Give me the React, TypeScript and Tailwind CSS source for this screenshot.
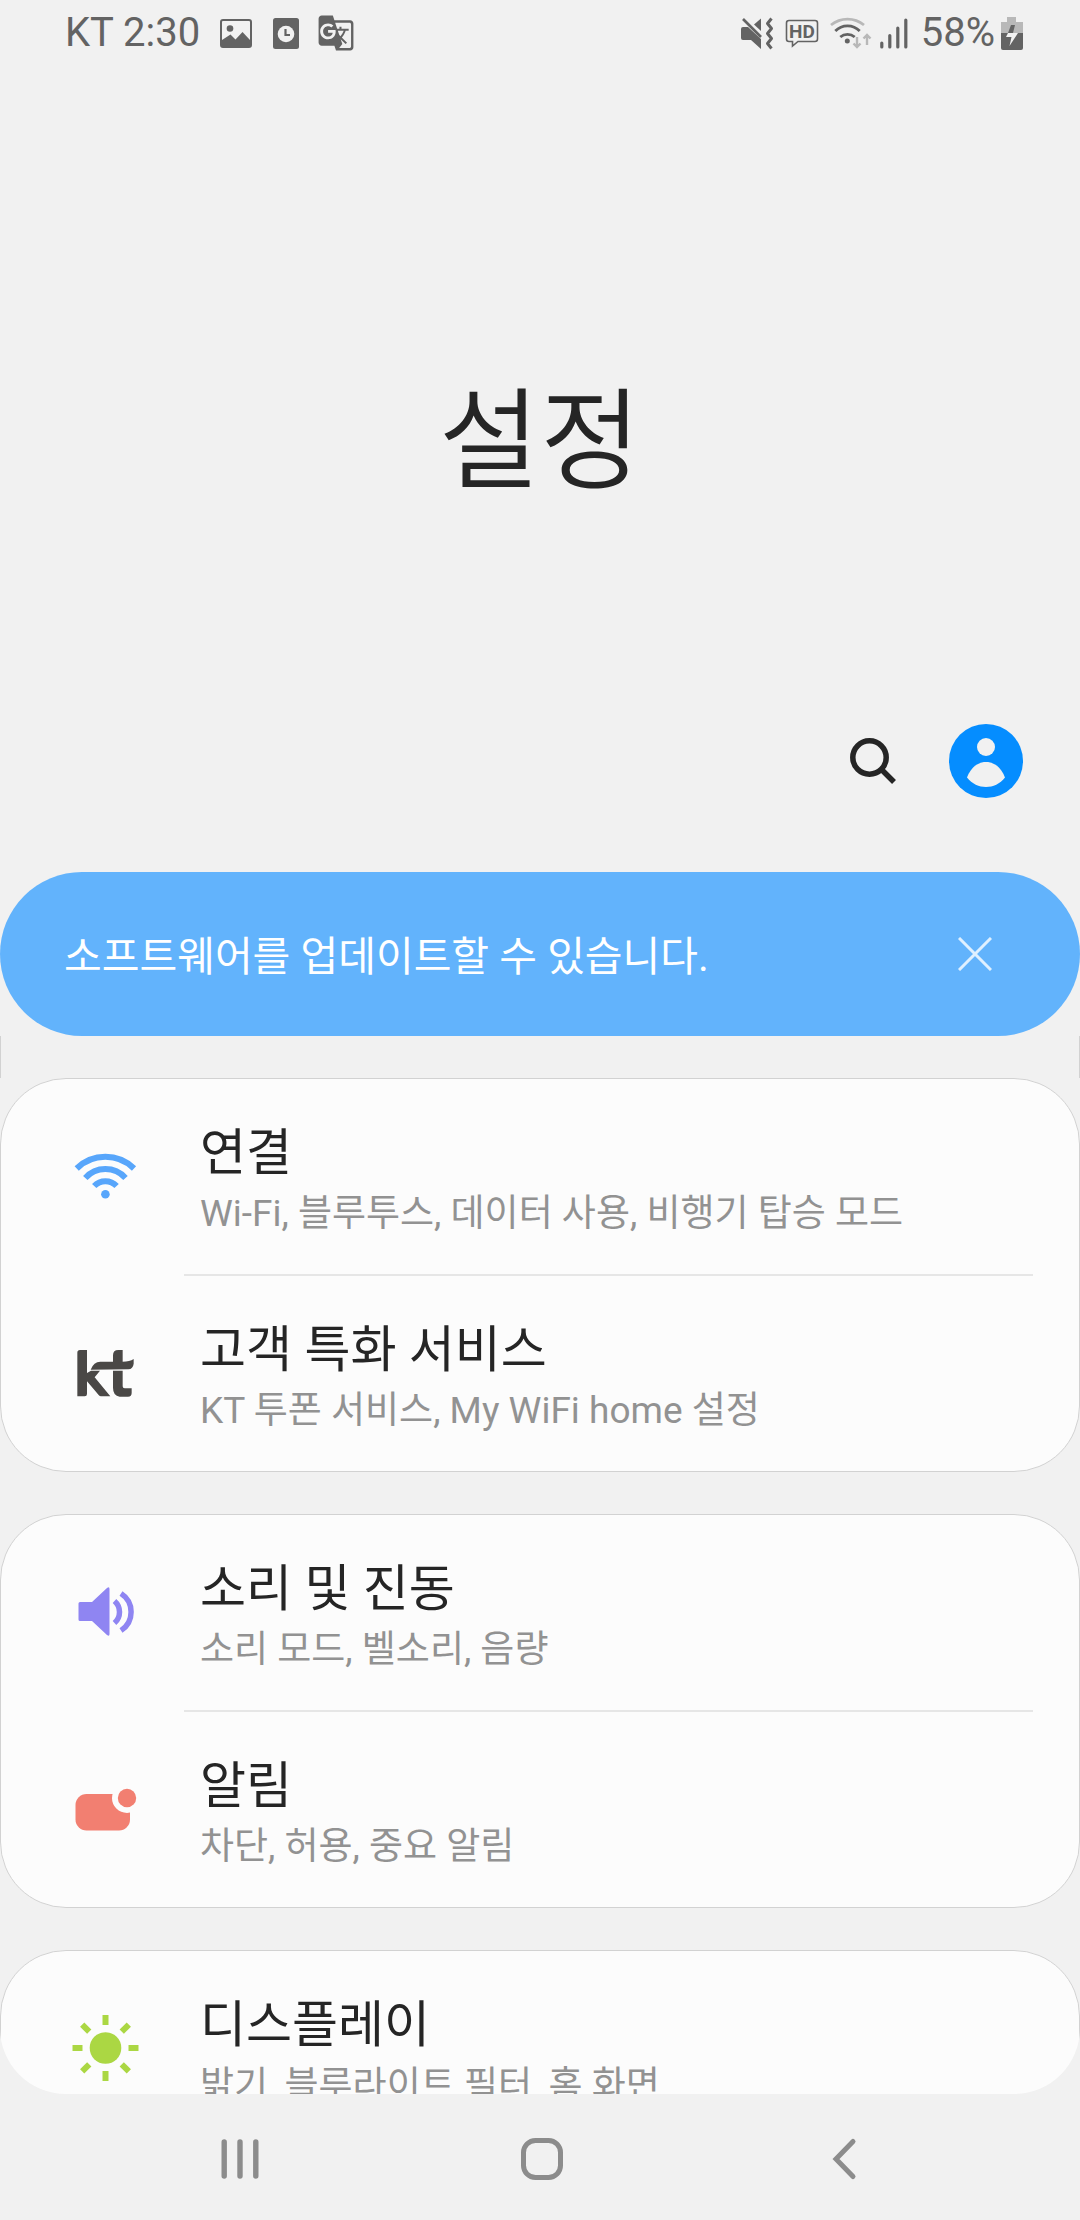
import React from 'react';
import { MdGTranslate } from 'react-icons/md';

interface SettingItem {
  title: string;
  summary: string;
  icon: React.JSX.Element;
}

function WifiIcon(): React.JSX.Element {
  return (
    <svg viewBox="0 0 72 72" className="size-[72px]" fill="none" stroke="#58a6fb" strokeWidth="6">
      <path d="M7.7 27.5A41 41 0 0 1 65 27.5" />
      <path d="M16.3 37A27 27 0 0 1 56.5 37" />
      <path d="M25.2 45A15.4 15.4 0 0 1 47.6 45" />
      <circle cx="36.4" cy="53.2" r="4.3" fill="#58a6fb" stroke="none" />
    </svg>
  );
}

function KtLogo(): React.JSX.Element {
  return (
    <svg viewBox="0 0 216 216" className="size-[72px]" fill="#4a4846">
      <path d="M33 39H54V108L66 101H93L77 121L124 178H96Q92 178 89 174L54 133V171Q54 178 47 178H25V47Q25 39 33 39Z" />
      <path d="M132 74V55Q132 39 148 39H161V74Q182 74 194 66V80Q192 96 178 97L65 98Q74 74 94 74Z" />
      <path d="M132 101H161V148Q161 154 167 154H188V168Q188 179 177 179H152Q132 176 132 152Z" />
    </svg>
  );
}

function SoundIcon(): React.JSX.Element {
  return (
    <svg viewBox="0 0 72 72" className="size-[72px]" fill="none" stroke="#8f85f2" strokeWidth="5.5">
      <path
        d="M11 25H23L38 11Q40.5 9 40.5 12V57Q40.5 60 38 58L23 44H11Q9.5 44 9.5 42.5V26.5Q9.5 25 11 25Z"
        fill="#8f85f2"
        stroke="none"
      />
      <path d="M45.5 24A14.6 14.6 0 0 1 45.5 46" />
      <path d="M52 16.5A22 22 0 0 1 52 53.5" />
    </svg>
  );
}

function NotificationIcon(): React.JSX.Element {
  return (
    <svg viewBox="0 0 72 72" className="size-[72px]" fill="#f27f71">
      <rect x="6.5" y="21" width="54.5" height="36.5" rx="11" />
      <circle cx="58" cy="25" r="15" fill="#fcfcfc" />
      <circle cx="58" cy="25" r="9.2" />
    </svg>
  );
}

function SunIcon(): React.JSX.Element {
  const angles = [0, 45, 90, 135, 180, 225, 270, 315];

  return (
    <svg viewBox="0 0 72 72" className="size-[72px]" fill="#abd743">
      <circle cx="36.5" cy="35" r="15.8" />
      {angles.map((angle) => (
        <rect key={angle} x="33.5" y="2" width="6" height="10" transform={`rotate(${angle} 36.5 35)`} />
      ))}
    </svg>
  );
}

const groups: SettingItem[][] = [
  [
    {
      title: '연결',
      summary: 'Wi-Fi, 블루투스, 데이터 사용, 비행기 탑승 모드',
      icon: <WifiIcon />,
    },
    {
      title: '고객 특화 서비스',
      summary: 'KT 투폰 서비스, My WiFi home 설정',
      icon: <KtLogo />,
    },
  ],
  [
    { title: '소리 및 진동', summary: '소리 모드, 벨소리, 음량', icon: <SoundIcon /> },
    { title: '알림', summary: '차단, 허용, 중요 알림', icon: <NotificationIcon /> },
  ],
  [{ title: '디스플레이', summary: '밝기, 블루라이트 필터, 홈 화면', icon: <SunIcon /> }],
];

function StatusBar(): React.JSX.Element {
  return (
    <div className="flex h-[66px] shrink-0 items-center justify-between pr-[57px] pl-[65px] text-[40px] leading-[66px] text-[#636363]">
      <div className="flex items-center">
        <span>KT 2:30</span>
        <svg viewBox="0 0 32 29" className="ml-5 h-[29px] w-8" fill="#636363">
          <rect x="1" y="1" width="30" height="27" rx="2" fill="none" stroke="#636363" strokeWidth="2" />
          <circle cx="10" cy="9.5" r="3.3" />
          <path d="M2 21L10.5 15.5L15.5 20.5L22.5 13L30 21V28H2Z" />
        </svg>
        <svg viewBox="0 0 26 31" className="ml-[21px] h-[31px] w-[26px]" fill="#636363">
          <rect width="26" height="31" rx="2.5" />
          <circle cx="13" cy="16" r="8.3" fill="#f1f1f1" />
          <path d="M12.5 11V17H17" fill="none" stroke="#636363" strokeWidth="2.2" />
        </svg>
        <MdGTranslate className="ml-[18px] size-[38px]" />
      </div>

      <div className="flex items-center">
        <svg viewBox="0 0 33 33" className="size-[33px]" fill="#636363">
          <path d="M0 12Q0 10 2 10H7L20 22V32L10 23H2Q0 23 0 21Z" />
          <path d="M13 7.5L20 1.5V14Z" />
          <path d="M2 2L20 20" stroke="#636363" strokeWidth="2.6" />
          <path
            d="M30.5 1.5L26.5 6.5L30.5 11.5L26.5 16.5L30.5 21.5L26.5 26.5L30.5 31.5"
            fill="none"
            stroke="#636363"
            strokeWidth="3"
            strokeLinejoin="round"
          />
        </svg>
        <svg viewBox="0 0 34 29" className="ml-[11px] h-[29px] w-[34px]" fill="none">
          <path
            d="M4 1.5H30Q32.5 1.5 32.5 4V20Q32.5 22.5 30 22.5H13L7.5 27V22.5H4Q1.5 22.5 1.5 20V4Q1.5 1.5 4 1.5Z"
            stroke="#636363"
            strokeWidth="1.6"
          />
          <text x="17" y="18.5" textAnchor="middle" fontSize="19" fontWeight="700" fill="#636363">
            HD
          </text>
        </svg>
        <svg viewBox="0 0 42 32" className="ml-[11px] h-8 w-[42px]" fill="none" stroke="#636363" strokeWidth="2.8">
          <path d="M1 8A26 26 0 0 1 34 8" stroke="#b8b8b8" />
          <path d="M5.3 14A17 17 0 0 1 29.7 14" />
          <path d="M10.3 20A11 11 0 0 1 24.7 20" />
          <circle cx="17.3" cy="24" r="2.5" fill="#636363" stroke="none" />
          <path d="M27 20V30M23.5 26.5L27 30L30.5 26.5" stroke="#b8b8b8" strokeWidth="2.4" />
          <path d="M37 28V18M33.5 21.5L37 18L40.5 21.5" stroke="#b8b8b8" strokeWidth="2.4" />
        </svg>
        <svg viewBox="0 0 28 31" className="ml-2 h-[31px] w-7" stroke="#636363" strokeWidth="3.2" strokeLinecap="round">
          <path d="M1.8 25V29M9.8 17.5V29M17.8 10V29M25.8 2V29" />
        </svg>
        <span className="ml-[13px]">58%</span>
        <svg viewBox="0 0 22 33" className="ml-[6px] h-[33px] w-[22px]">
          <path d="M6 0H15V5H22V17H0V5H6Z" fill="#b8b8b8" />
          <path d="M0 16H22V31Q22 33 20 33H2Q0 33 0 31Z" fill="#636363" />
          <path d="M10 8H14L12 16H7Z" fill="#636363" />
          <path d="M7 16H17L8.5 29L10.5 20H5Z" fill="#f1f1f1" />
        </svg>
      </div>
    </div>
  );
}

function Header(): React.JSX.Element {
  return (
    <header className="shrink-0 pt-[296px] pb-[74px]">
      <h1 className="text-center font-['Noto_Sans_CJK_KR_DemiLight','Noto_Sans_CJK_KR',sans-serif] text-[110px] leading-[140px] font-[350] text-[#252525]">
        설정
      </h1>
      <div className="mt-[222px] flex h-[74px] items-center justify-end gap-[52px] pr-[57px]">
        <button type="button" aria-label="검색">
          <svg viewBox="0 0 48 48" className="size-12" fill="none" stroke="#252525" strokeWidth="5.5">
            <circle cx="20.5" cy="20.5" r="16.7" />
            <path d="M32 32L45 45" />
          </svg>
        </button>
        <button type="button" aria-label="프로필">
          <svg viewBox="0 0 74 74" className="size-[74px]" fill="#f1f1f1">
            <circle cx="37" cy="37" r="37" fill="#058dff" />
            <circle cx="37" cy="23" r="9" />
            <path d="M18 53.5C22 43 29 38 37 38S52 43 56 53.5C51 60 44 63 37 63S23 60 18 53.5Z" />
          </svg>
        </button>
      </div>
    </header>
  );
}

function UpdateBanner(): React.JSX.Element {
  return (
    <div className="flex items-center justify-between rounded-full bg-[#62b3fc] py-[49px] pr-[88px] pl-16">
      <p className="pt-[6px] text-[41px] leading-[60px] text-white">소프트웨어를 업데이트할 수 있습니다.</p>
      <button type="button" aria-label="닫기">
        <svg viewBox="0 0 34 34" className="size-[34px]" stroke="#dff0ff" strokeWidth="3">
          <path d="M1 1L33 33M33 1L1 33" />
        </svg>
      </button>
    </div>
  );
}

function SettingRow({ item, divided }: { item: SettingItem; divided: boolean }): React.JSX.Element {
  return (
    <button type="button" className="flex w-full items-stretch text-left">
      <span className="flex w-[183px] shrink-0 items-center pl-[68px]">{item.icon}</span>
      <span
        className={`mr-[46px] flex flex-1 flex-col pt-10 pb-[33px] pl-4 ${divided ? 'border-t-2 border-[#e6e6e6]' : ''}`}
      >
        <span className="text-[50px] leading-[68px] text-[#252525]">{item.title}</span>
        <span className="text-[37px] leading-[54px] text-[#929292]">{item.summary}</span>
      </span>
    </button>
  );
}

function NavigationBar(): React.JSX.Element {
  return (
    <nav className="grid h-[126px] shrink-0 grid-cols-3 items-center pt-1 pr-[85px] pl-[89px]">
      <button type="button" aria-label="최근 앱" className="flex justify-center">
        <svg viewBox="0 0 44 44" className="size-11" stroke="#8c8c8c" strokeWidth="5.4" strokeLinecap="round">
          <path d="M6.2 5V39M22 5V39M37.8 5V39" />
        </svg>
      </button>
      <button type="button" aria-label="홈" className="flex justify-center">
        <svg viewBox="0 0 44 44" className="size-11" fill="none" stroke="#8c8c8c" strokeWidth="5">
          <rect x="3.5" y="3.5" width="37" height="37" rx="12" />
        </svg>
      </button>
      <button type="button" aria-label="뒤로" className="flex justify-center">
        <svg viewBox="0 0 44 44" className="size-11" fill="none" stroke="#8c8c8c" strokeWidth="5" strokeLinecap="round">
          <path d="M31 4.5L14 22L31 39.5" />
        </svg>
      </button>
    </nav>
  );
}

export default function App(): React.JSX.Element {
  return (
    <div className="flex h-screen flex-col bg-[#f1f1f1] font-[Roboto,'Noto_Sans_CJK_KR',sans-serif]">
      <StatusBar />
      <Header />
      <main className="min-h-0 flex-1 overflow-hidden rounded-b-[66px]">
        <UpdateBanner />
        <div className="h-[42px] border-x border-[#d2d2d2]" />
        <div className="flex flex-col gap-[42px]">
          {groups.map((items) => (
            <section
              key={items[0].title}
              className="overflow-hidden rounded-[66px] border border-[#d2d2d2] bg-[#fcfcfc]"
            >
              {items.map((item, index) => (
                <SettingRow key={item.title} item={item} divided={index > 0} />
              ))}
            </section>
          ))}
        </div>
      </main>
      <NavigationBar />
    </div>
  );
}
